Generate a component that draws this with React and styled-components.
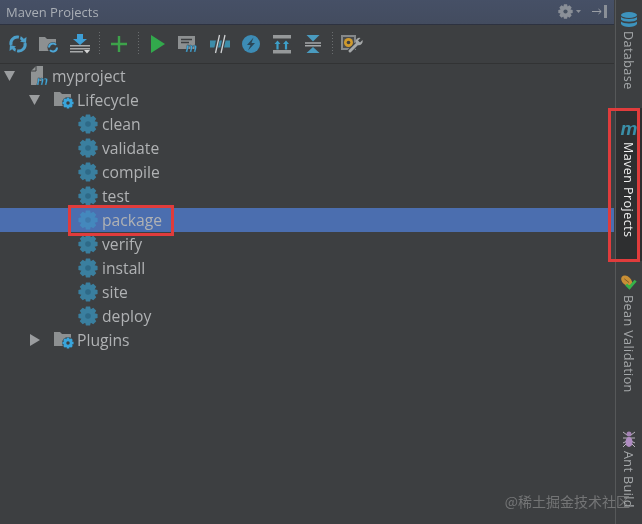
import React from "react";
import styled, { createGlobalStyle } from "styled-components";

const Global = createGlobalStyle`
  html, body { margin: 0; padding: 0; background: #3d3f41; }
  #root { width: 642px; height: 524px; overflow: hidden; }
`;

const Frame = styled.div`
  position: relative;
  display: flex;
  width: 642px;
  height: 524px;
  overflow: hidden;
  background: #3d3f41;
  font-family: "Open Sans", "Noto Sans", sans-serif;
  filter: blur(0.35px);
`;
const Panel = styled.main`
  width: 614px;
  display: flex;
  flex-direction: column;
`;
const TitleBar = styled.header`
  height: 25px;
  box-sizing: border-box;
  display: flex;
  align-items: center;
  justify-content: space-between;
  padding: 0 6px 1px 6px;
  background: linear-gradient(#465066, #434c5f);
  border-bottom: 1px solid #2d3240;
`;
const Title = styled.span`
  font-size: 13px;
  color: #a9aeb5;
`;
const TitleTools = styled.div`
  display: flex;
  align-items: center;
  gap: 11px;
`;
const Toolbar = styled.nav`
  height: 39px;
  box-sizing: border-box;
  display: flex;
  align-items: center;
  padding: 0 0 0 2.5px;
  border-bottom: 1px solid #323334;
`;
const ToolButton = styled.span`
  width: 31px;
  height: 24px;
  display: flex;
  align-items: center;
  justify-content: center;
`;
const ToolSep = styled.span`
  width: 8px;
  height: 24px;
  flex: none;
  background: repeating-linear-gradient(#6a6d6f 0 1px, transparent 1px 3px) center / 1px 100% no-repeat;
`;
const Tree = styled.ul`
  list-style: none;
  margin: 0;
  padding: 0;
`;
const Row = styled.li`
  height: 24px;
  display: flex;
  align-items: center;
  padding-left: ${(p) => p.$pad}px;
  background: ${(p) => (p.$selected ? "#4b6eaf" : "transparent")};
`;
const ArrowSlot = styled.span`
  width: ${(p) => p.$w}px;
  flex: none;
  display: flex;
  align-items: center;
`;
const IconSlot = styled.span`
  width: ${(p) => p.$w}px;
  flex: none;
  display: flex;
  align-items: center;
`;
const Label = styled.span`
  font-size: 15.7px;
  line-height: 24px;
  color: #b0b2b4;
`;
const Sidebar = styled.aside`
  width: 26px;
  margin-left: 1px;
  border-left: 1px solid #565859;
  display: flex;
  flex-direction: column;
  align-items: stretch;
`;
const Tab = styled.div`
  height: ${(p) => p.$h}px;
  box-sizing: border-box;
  padding-top: ${(p) => p.$top}px;
  flex: none;
  display: flex;
  flex-direction: column;
  align-items: center;
  gap: 3px;
  background: ${(p) => (p.$active ? "#2e2f30" : "transparent")};
`;
const TabText = styled.span`
  writing-mode: vertical-rl;
  margin-right: 3px;
  font-size: 12.6px;
  line-height: 16px;
  letter-spacing: 0.4px;
  color: ${(p) => (p.$active ? "#f0f0f0" : "#a5a8aa")};
  white-space: nowrap;
`;
const Highlight = styled.div`
  position: absolute;
  box-sizing: border-box;
  border: 3px solid #e03c3c;
  left: ${(p) => p.$x}px;
  top: ${(p) => p.$y}px;
  width: ${(p) => p.$w}px;
  height: ${(p) => p.$h}px;
`;
const Watermark = styled.div`
  position: absolute;
  right: 12px;
  bottom: 14px;
  font-family: "Noto Sans CJK SC", "Noto Sans", sans-serif;
  font-size: 14px;
  line-height: 18px;
  color: rgba(190, 190, 190, 0.42);
`;
const MarkText = styled.text`
  font-family: "Liberation Sans", sans-serif;
  font-style: italic;
  font-weight: 700;
`;

const gearPath = (() => {
  const teeth = 8;
  const cx = 10, cy = 10, R = 9.8, r = 7.2;
  let d = "";
  for (let i = 0; i < teeth; i++) {
    const a = (i / teeth) * Math.PI * 2;
    const w = Math.PI / 11;
    const pts = [
      [r, a - w * 1.4],
      [R, a - w * 0.75],
      [R, a + w * 0.75],
      [r, a + w * 1.4],
    ];
    pts.forEach(([rad, t], j) => {
      const x = (cx + rad * Math.cos(t)).toFixed(2);
      const y = (cy + rad * Math.sin(t)).toFixed(2);
      d += (i === 0 && j === 0 ? "M" : "L") + x + " " + y;
    });
  }
  return d + "Z";
})();

const Gear = ({ size = 20, color = "#3a7f9f", hole = "#2e6a88" }) => (
  <svg width={size} height={size} viewBox="0 0 20 20">
    <path d={gearPath} fill={color} />
    <circle cx="10" cy="10" r="2.800" fill={hole} />
  </svg>
);

const Sync = () => (
  <svg width="20" height="20" viewBox="0 0 20 20" fill="none">
    <path d="M3 11C2 6 6 2.500 10 3c2.500.3 4 1.500 5 3" stroke="#4d9fc9" strokeWidth="3" />
    <path d="M17 9c1 5-3 8.500-7 8-2.500-.3-4-1.500-5-3" stroke="#4d9fc9" strokeWidth="3" />
    <path d="M12 7.500 18 9l.5-6z" fill="#4d9fc9" />
    <path d="M8 12.500 2 11l-.5 6z" fill="#4d9fc9" />
    <path d="M12 2 8 18" stroke="#3d3f41" strokeWidth="1.500" />
  </svg>
);
const FolderSync = () => (
  <svg width="20" height="18" viewBox="0 0 20 18">
    <path d="M0 2h6l2 2h9v12H0z" fill="#8d9091" />
    <circle cx="14" cy="12.500" r="5.500" fill="#3d3f41" />
    <path d="M10 12.500a4 4 0 0 1 7-2.600M18 12.500a4 4 0 0 1-7 2.600" stroke="#4da6d6" strokeWidth="2" fill="none" />
  </svg>
);
const Download = () => (
  <svg width="22" height="20" viewBox="0 0 22 20">
    <path d="M8 0h6v5h4l-7 6-7-6h4z" fill="#3d9fd6" />
    <path d="M1 11h20v1.500H1zM1 14h20v1.500H1zM1 17h13v1.500H1z" fill="#a8aaab" />
    <path d="M15 16h6l-3 3.500z" fill="#d5d5d5" />
  </svg>
);
const Plus = () => (
  <svg width="16" height="16" viewBox="0 0 16 16">
    <path d="M6.800 0h2.400v6.800H16v2.400H9.200V16H6.800V9.200H0V6.800h6.800z" fill="#3da24a" />
  </svg>
);
const Run = () => (
  <svg width="14" height="18" viewBox="0 0 14 18">
    <path d="M0 0l14 9-14 9z" fill="#32a94c" />
  </svg>
);
const Exec = () => (
  <svg width="22" height="22" viewBox="0 0 22 22">
    <path d="M0 3h17v13H0z" fill="#8d9091" />
    <path d="M3 6.500h11M3 9.500h8" stroke="#3d3f41" strokeWidth="1.300" />
    <MarkText x="7.500" y="19" fontSize="13" fill="#3fa6d8" stroke="#3d3f41" strokeWidth="0.300">m</MarkText>
  </svg>
);
const Skip = () => (
  <svg width="20" height="20" viewBox="0 0 20 20">
    <rect x="0" y="6.500" width="20" height="7" fill="#3d8ca8" />
    <path d="M9 1 5 19M15 1l-4 18" stroke="#3d3f41" strokeWidth="3.500" />
    <path d="M9.500 1 5.500 19M15 1l-4 18" stroke="#d0d2d3" strokeWidth="1.300" />
  </svg>
);
const Bolt = () => (
  <svg width="20" height="20" viewBox="0 0 20 20">
    <circle cx="10" cy="10" r="9" fill="#3d8cb5" />
    <path d="M12.500 3.500 6 11h3.500L7 16.500 14 9h-3.500z" fill="#2b4657" />
  </svg>
);
const Collapse = () => (
  <svg width="20" height="19" viewBox="0 0 20 19">
    <path d="M1 0h18v3.500H1zM1 15h18v3.500H1z" fill="#96999a" />
    <path d="M5.500 5.500l3 3.500H6.600v5.500H4.400V9H2.500zM14 5.500l3 3.500h-1.900v5.500h-2.200V9H11z" fill="#3d9fc8" />
  </svg>
);
const Expand = () => (
  <svg width="18" height="18" viewBox="0 0 18 18">
    <path d="M2.500 0h13L9 6.500z" fill="#4a9bbf" />
    <path d="M1 7.300h16v1.400H1zM1 10h16v1.400H1z" fill="#a5a8a9" />
    <path d="M2.500 18h13L9 12z" fill="#4a9bbf" />
  </svg>
);
const Settings = () => (
  <svg width="22" height="20" viewBox="0 0 22 20">
    <rect x="0" y="1" width="15" height="15" fill="#85888a" />
    <rect x="2" y="3" width="11" height="11" fill="#4a4c4e" />
    <circle cx="7.500" cy="8.500" r="4.500" fill="#cf9a2e" />
    <circle cx="7.500" cy="8.500" r="1.800" fill="#3d3f41" />
    <path d="M18 8 9 17" stroke="#3d3f41" strokeWidth="5" strokeLinecap="round" />
    <path d="M17 9 9 17" stroke="#a5a8a9" strokeWidth="3" strokeLinecap="round" />
    <path d="M14.500 8.500a4 4 0 0 1 5-4.500l-2.500 2.500 2 2L21.500 6a4 4 0 0 1-5 5z" fill="#a5a8a9" />
  </svg>
);
const TitleGear = () => <Gear size={15} color="#8a8f97" hole="#46505f" />;
const Caret = () => (
  <svg width="5" height="3" viewBox="0 0 5 3" style={{ marginLeft: -8 }}>
    <path d="M0 0h5L2.500 3z" fill="#8a8f97" />
  </svg>
);
const Hide = () => (
  <svg width="16" height="14" viewBox="0 0 16 14">
    <path d="M0 6.500h9M6.500 4l2.700 2.500L6.500 9" stroke="#9a9ea5" fill="none" />
    <rect x="12" y="0" width="3" height="13" fill="#8a8f97" />
  </svg>
);
const Down = () => (
  <svg width="11" height="10" viewBox="0 0 11 10">
    <path d="M0 0h11L5.500 10z" fill="#9b9d9f" />
  </svg>
);
const Right = () => (
  <svg width="10" height="12" viewBox="0 0 10 12">
    <path d="M0 0l10 6-10 6z" fill="#9b9d9f" />
  </svg>
);
const Project = () => (
  <svg width="22" height="24" viewBox="0 0 22 24">
    <path d="M1 7 6 2h7v15H9v4H1z" fill="#909394" />
    <path d="M1 7h5V2" stroke="#3d3f41" fill="none" />
    <MarkText x="6.500" y="21" fontSize="13" fill="#3fa6d8" stroke="#3d3f41" strokeWidth="0.300">m</MarkText>
  </svg>
);
const FolderGear = () => (
  <svg width="20" height="18" viewBox="0 0 20 18">
    <path d="M0 1h6l2 2h9v12H0z" fill="#8d9091" />
    <circle cx="14" cy="12" r="6" fill="#3d3f41" />
    <g transform="translate(8.200 6.200) scale(0.58)">
      <path d={gearPath} fill="#39a5dc" />
      <circle cx="10" cy="10" r="3" fill="#3d3f41" />
    </g>
  </svg>
);
const DbIcon = () => (
  <svg width="18" height="16" viewBox="0 0 18 16">
    <ellipse cx="9" cy="3" rx="8" ry="3" fill="#3d93bd" />
    <path d="M1 5c2 2.500 14 2.500 16 0v2.500c-2 3-14 3-16 0zM1 9.500c2 2.500 14 2.500 16 0V12c-2 4-14 4-16 0z" fill="#3d93bd" />
  </svg>
);
const MavenM = () => (
  <svg width="24" height="22" viewBox="0 0 24 22">
    <MarkText x="3.500" y="18" fontSize="19" fill="#3a8fa8">m</MarkText>
  </svg>
);
const Bean = () => (
  <svg width="18" height="17" viewBox="0 0 18 18">
    <ellipse cx="6.500" cy="6" rx="6.500" ry="4.500" transform="rotate(40 6.500 6)" fill="#c98f35" />
    <path d="M4 4l5 4" stroke="#7d5a25" />
    <path d="M6 10l3.500 3.500L16 6" stroke="#37b24a" strokeWidth="3" fill="none" />
  </svg>
);
const Ant = () => (
  <svg width="14" height="18" viewBox="0 0 14 18">
    <path d="M1 2l4 3M13 2L9 5M1 8h12M1 13l4-2M13 13l-4-2M1 17l3-3M13 17l-3-3" stroke="#b9b3bd" />
    <circle cx="7" cy="4" r="2.500" fill="#a583b5" />
    <ellipse cx="7" cy="12" rx="3.500" ry="5" fill="#b08cc2" />
  </svg>
);

const tools = [
  <Sync />, <FolderSync />, <Download />, "sep", <Plus />, "sep", <Run />, <Exec />,
  <Skip />, <Bolt />, <Collapse />, <Expand />, "sep", <Settings />,
];
const goals = ["clean", "validate", "compile", "test", "package", "verify", "install", "site", "deploy"];

export default function App() {
  return (
    <Frame>
      <Global />
      <Panel>
        <TitleBar>
          <Title>Maven Projects</Title>
          <TitleTools>
            <TitleGear />
            <Caret />
            <Hide />
          </TitleTools>
        </TitleBar>
        <Toolbar>
          {tools.map((t, i) =>
            t === "sep" ? <ToolSep key={i} /> : <ToolButton key={i}>{t}</ToolButton>
          )}
        </Toolbar>
        <Tree>
          <Row $pad={4}>
            <ArrowSlot $w={26}><Down /></ArrowSlot>
            <IconSlot $w={22}><Project /></IconSlot>
            <Label>myproject</Label>
          </Row>
          <Row $pad={29}>
            <ArrowSlot $w={25}><Down /></ArrowSlot>
            <IconSlot $w={23}><FolderGear /></IconSlot>
            <Label>Lifecycle</Label>
          </Row>
          {goals.map((g) => {
            const selected = g === "package";
            return (
              <Row key={g} $pad={52} $selected={selected}>
                <ArrowSlot $w={26} />
                <IconSlot $w={24}>
                  {selected ? <Gear color="#4488bd" hole="#3f79ab" /> : <Gear />}
                </IconSlot>
                <Label>{g}</Label>
              </Row>
            );
          })}
          <Row $pad={30}>
            <ArrowSlot $w={24}><Right /></ArrowSlot>
            <IconSlot $w={23}><FolderGear /></IconSlot>
            <Label>Plugins</Label>
          </Row>
        </Tree>
      </Panel>
      <Sidebar>
        <Tab $h={108} $top={12}><DbIcon /><TabText>Database</TabText></Tab>
        <Tab $h={153} $top={9} $active><MavenM /><TabText $active>Maven Projects</TabText></Tab>
        <Tab $h={169} $top={14}><Bean /><TabText>Bean Validation</TabText></Tab>
        <Tab $h={94} $top={0}><Ant /><TabText>Ant Build</TabText></Tab>
      </Sidebar>
      <Highlight $x={68} $y={205} $w={106} $h={31} />
      <Highlight $x={608} $y={108} $w={32} $h={154} />
      <Watermark>@稀土掘金技术社区</Watermark>
    </Frame>
  );
}
